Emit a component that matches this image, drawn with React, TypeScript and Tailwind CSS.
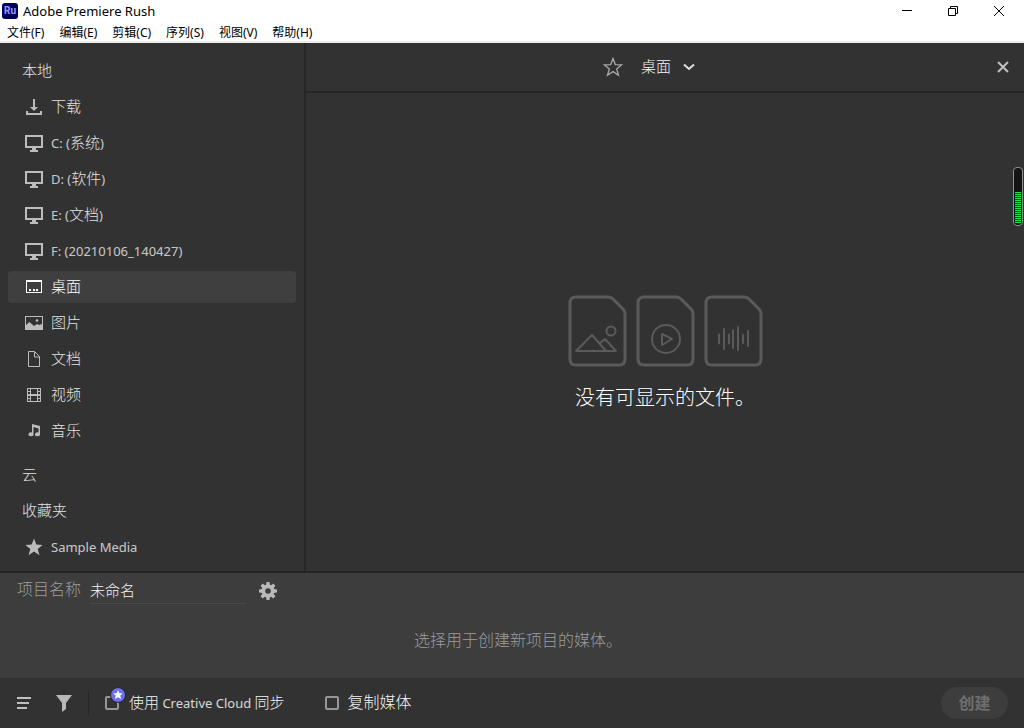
import { useState } from 'react'
import type { ReactNode } from 'react'

type Place = {
    id: string
    label: string
    icon: ReactNode
}

const MENUS = ['文件(F)', '编辑(E)', '剪辑(C)', '序列(S)', '视图(V)', '帮助(H)']

function DownloadIcon() {
    return (
        <svg width="20" height="20" viewBox="0 0 20 20" fill="currentColor">
            <path d="M9 2h2v8h3l-4 4-4-4h3zM2 14h2v2h12v-2h2v4H2z" />
        </svg>
    )
}

function DriveIcon() {
    return (
        <svg width="20" height="20" viewBox="0 0 20 20" fill="currentColor">
            <path fillRule="evenodd" d="M1 2h18v13h-7v2h2v2H6v-2h2v-2H1zM3 4v9h14V4z" />
        </svg>
    )
}

function DesktopIcon() {
    return (
        <svg width="20" height="20" viewBox="0 0 20 20" fill="currentColor">
            <path fillRule="evenodd" d="M2 3h16v13H2zM3 5v10h14V5z" />
            <path d="M5 12h2v2H5zM9 12h2v2H9zM12 12h2v2h-2z" />
        </svg>
    )
}

function PictureIcon() {
    return (
        <svg width="20" height="20" viewBox="0 0 20 20" fill="currentColor">
            <path fillRule="evenodd" d="M1 3h18v14H1zM2 4v8l3.500-3 4.500 4 3-2 2 1 3-1V4z" />
            <circle cx="13" cy="7.500" r="1.300" />
        </svg>
    )
}

function DocumentIcon() {
    return (
        <svg width="20" height="20" viewBox="0 0 20 20" fill="none" stroke="currentColor">
            <path d="M4.500 2.500h6l5 5v10h-11zM10.500 2.500v5.500h5" />
        </svg>
    )
}

function VideoIcon() {
    return (
        <svg width="20" height="20" viewBox="0 0 20 20" fill="currentColor">
            <path
                fillRule="evenodd"
                d="M3 3h14v14H3zM4 4v2h2V4zM4 7v2h2V7zM4 11v2h2v-2zM4 14v2h2v-2zM14 4v2h2V4zM14 7v2h2V7zM14 11v2h2v-2zM14 14v2h2v-2zM7 4v5h6V4zM7 11v5h6v-5z"
            />
        </svg>
    )
}

function MusicIcon() {
    return (
        <svg width="20" height="20" viewBox="0 0 20 20" fill="currentColor">
            <path d="M8 3l8 2v8.500a2.500 2 0 1 1-1.500-2V7.500L9.500 6v7a2.500 2 0 1 1-1.500-1.600z" />
        </svg>
    )
}

function StarIcon({ outline = false }: { outline?: boolean }) {
    return (
        <svg
            width="20"
            height="20"
            viewBox="0 0 20 20"
            fill={outline ? 'none' : 'currentColor'}
            stroke={outline ? 'currentColor' : 'none'}
            strokeWidth="1.300"
        >
            <path d="M10 1.500l2.300 6.100 6.200.3-4.800 4 1.800 6.300-5.500-3.600-5.500 3.600 1.800-6.300-4.800-4 6.200-.3z" />
        </svg>
    )
}

function GearIcon() {
    return (
        <svg width="20" height="20" viewBox="0 0 20 20">
            <g fill="#b9b9b9">
                <circle cx="10" cy="10" r="6.500" />
                <path d="M8.500 1h3l.5 4H8zM8.500 19h3l.5-4H8zM1 8.500v3l4 .5V8zM19 8.500v3l-4 .5V8z" />
                <path
                    d="M8.500 1h3l.5 4H8zM8.500 19h3l.5-4H8zM1 8.500v3l4 .5V8zM19 8.500v3l-4 .5V8z"
                    transform="rotate(45 10 10)"
                />
            </g>
            <circle cx="10" cy="10" r="2.800" fill="#3d3d3d" />
        </svg>
    )
}

function FileOutline({ children }: { children: ReactNode }) {
    return (
        <svg width="59" height="72" viewBox="0 0 59 72" fill="none" stroke="#5a5a5a" strokeWidth="2" strokeLinejoin="round" strokeLinecap="round">
            <path strokeWidth="3" d="M8 2h32q3 0 5 2l10 10q2 2 2 5v45q0 6-6 6H8q-6 0-6-6V8q0-6 6-6z" />
            {children}
        </svg>
    )
}

const LOCAL_PLACES: Place[] = [
    { id: 'downloads', label: '下载', icon: <DownloadIcon /> },
    { id: 'c', label: 'C: (系统)', icon: <DriveIcon /> },
    { id: 'd', label: 'D: (软件)', icon: <DriveIcon /> },
    { id: 'e', label: 'E: (文档)', icon: <DriveIcon /> },
    { id: 'f', label: 'F: (20210106_140427)', icon: <DriveIcon /> },
    { id: 'desktop', label: '桌面', icon: <DesktopIcon /> },
    { id: 'pictures', label: '图片', icon: <PictureIcon /> },
    { id: 'documents', label: '文档', icon: <DocumentIcon /> },
    { id: 'videos', label: '视频', icon: <VideoIcon /> },
    { id: 'music', label: '音乐', icon: <MusicIcon /> },
]

// Latin runs are set smaller than the Chinese ones next to them
function MixedText({ text }: { text: string }) {
    return (
        <>
            {text.split(/([\u4e00-\u9fff]+)/).map((part, i) => (
                <span key={i} className={i % 2 ? 'text-[15px] font-light' : 'text-[13px] opacity-85'}>{part}</span>
            ))}
        </>
    )
}

function PlaceButton({ place, active, onClick }: { place: Place; active: boolean; onClick: () => void }) {
    return (
        <button
            onClick={onClick}
            className={`flex h-8 w-full items-center gap-[7px] rounded-[4px] pl-4 text-left ${active ? 'bg-[#3f3f3f] text-white' : 'text-[#bcbcbc]'}`}
        >
            {place.icon}
            <span className={`pb-0.5 whitespace-pre leading-5 ${active ? 'text-white' : 'text-[#e2e2e2]'}`}>
                <MixedText text={place.label} />
            </span>
        </button>
    )
}

function SectionTitle({ children }: { children: ReactNode }) {
    return <h2 className="flex h-8 items-center pb-0.5 pl-[14px] text-[15px] font-light text-[#e2e2e2]">{children}</h2>
}

function TitleBar() {
    return (
        <header className="border-b-2 border-[#ececec] bg-white text-black">
            <div className="flex h-[22px] items-center justify-between">
                <div className="flex items-center gap-[5px] pl-[2px]">
                    <span className="flex size-4 items-center justify-center rounded-[3px] bg-[#00005b] font-[Roboto] text-[10px] leading-4 font-bold text-[#9999ff]">Ru</span>
                    <h1 className="text-[13px] leading-5">Adobe Premiere Rush</h1>
                </div>
                <div className="flex pr-[2px]">
                    <button aria-label="最小化" className="flex h-[22px] w-[46px] items-center justify-center">
                        <svg width="10" height="10" viewBox="0 0 10 10"><path d="M0 4h10v1H0z" /></svg>
                    </button>
                    <button aria-label="还原" className="flex h-[22px] w-[46px] items-center justify-center">
                        <svg width="10" height="10" viewBox="0 0 10 10" fill="none" stroke="#000">
                            <path d="M.5 2.500h7v7h-7zM2.500 2V.5h7v7H8" />
                        </svg>
                    </button>
                    <button aria-label="关闭" className="flex h-[22px] w-[46px] items-center justify-center">
                        <svg width="10" height="10" viewBox="0 0 10 10" stroke="#000"><path d="M0 0l10 10M10 0L0 10" /></svg>
                    </button>
                </div>
            </div>
            <nav className="flex h-[19px] gap-[15px] pl-[7px]">
                {MENUS.map(menu => (
                    <button key={menu} className="pt-px text-[12px] leading-5">{menu}</button>
                ))}
            </nav>
        </header>
    )
}

function Sidebar({ active, onSelect }: { active: string; onSelect: (id: string) => void }) {
    return (
        <aside className="flex w-[306px] shrink-0 flex-col gap-1 border-r-2 border-[#262626] px-2 pt-3 pb-2">
            <SectionTitle>本地</SectionTitle>
            {LOCAL_PLACES.map(place => (
                <PlaceButton key={place.id} place={place} active={place.id === active} onClick={() => onSelect(place.id)} />
            ))}
            <div className="mt-2 flex flex-col gap-1">
                <SectionTitle>云</SectionTitle>
                <SectionTitle>收藏夹</SectionTitle>
                <PlaceButton
                    place={{ id: 'sample', label: 'Sample Media', icon: <StarIcon /> }}
                    active={active === 'sample'}
                    onClick={() => onSelect('sample')}
                />
            </div>
        </aside>
    )
}

function AudioMeter() {
    return (
        <div className="absolute top-[124px] right-px flex h-[59px] w-[10px] flex-col justify-end rounded-[4px] border border-[#909090] bg-[#141414] px-px pb-[2px]">
            <div className="flex flex-col gap-px bg-[#0a4a1c]">
                {Array.from({ length: 16 }, (_, i) => (
                    <span key={i} className="h-px bg-[#1ee650]" />
                ))}
            </div>
        </div>
    )
}

function EmptyState() {
    return (
        <div className="flex flex-1 flex-col items-center justify-center pt-11">
            <div className="flex gap-[9px]">
                <FileOutline>
                    <path d="M8 56l16-16 14 16zM32 48l5-4 11 12H38" />
                    <circle cx="43" cy="36" r="4.500" />
                </FileOutline>
                <FileOutline>
                    <circle cx="30" cy="44" r="14" />
                    <path d="M26 39v11l10-6z" />
                </FileOutline>
                <FileOutline>
                    <path d="M15 39.500v9M20 34v20M25 39.500v9M29 35v18M34 32v23M39 40v8M44 36v15" />
                </FileOutline>
            </div>
            <p className="mt-4 text-[20px] leading-[30px] font-light text-white">没有可显示的文件。</p>
        </div>
    )
}

function Browser({ active, onSelect }: { active: string; onSelect: (id: string) => void }) {
    return (
        <main className="relative flex flex-1 flex-col">
            <div className="flex h-[50px] items-center border-b-2 border-[#262626]">
                <div className="flex flex-1 items-center justify-center gap-[18px] pr-1">
                    <button aria-label="收藏" className="text-[#a8a8a8]"><StarIcon outline /></button>
                    <div className="relative flex items-center">
                        <select
                            aria-label="位置"
                            value={active}
                            onChange={e => onSelect(e.target.value)}
                            className="w-[54px] appearance-none bg-transparent pb-0.5 text-[15px] leading-5 font-light text-[#f4f4f4] outline-none"
                        >
                            {LOCAL_PLACES.map(place => (
                                <option key={place.id} value={place.id}>{place.label}</option>
                            ))}
                        </select>
                        <svg className="pointer-events-none absolute right-0" width="12" height="8" viewBox="0 0 12 8" fill="none" stroke="#e0e0e0" strokeWidth="2">
                            <path d="M1 1.500l5 4.500 5-4.500" />
                        </svg>
                    </div>
                </div>
                <button aria-label="关闭面板" className="mr-[14px]">
                    <svg width="14" height="14" viewBox="0 0 14 14" stroke="#c0c0c0" strokeWidth="2"><path d="M2 2l10 10M12 2L2 12" /></svg>
                </button>
            </div>
            <EmptyState />
            <AudioMeter />
        </main>
    )
}

function ProjectBar() {
    return (
        <section className="h-[107px] border-t-2 border-[#262626] bg-[#3d3d3d]">
            <div className="flex h-9 items-center pl-[17px]">
                <label htmlFor="project-name" className="w-[73px] pb-1 text-[16px] leading-5 font-light text-[#9c9c9c]">项目名称</label>
                <input
                    id="project-name"
                    defaultValue="未命名"
                    className="h-[26px] w-[156px] border-b border-[#4a4a4a] bg-transparent pb-0.5 text-[15px] font-light text-[#f4f4f4] outline-none"
                />
                <button aria-label="设置" className="ml-3"><GearIcon /></button>
            </div>
            <p className="mt-[21px] pl-3 text-center text-[16px] leading-5 font-light text-[#9c9c9c]">选择用于创建新项目的媒体。</p>
        </section>
    )
}

const checkboxClass = 'size-[14px] appearance-none rounded-[2px] border-2 border-[#969696] checked:bg-[#969696]'

function Footer() {
    return (
        <footer className="flex h-[50px] items-center px-4 text-[#f4f4f4]">
            <button aria-label="排序" className="w-10">
                <svg width="16" height="14" viewBox="0 0 16 14" fill="#c0c0c0"><path d="M1 1h14v2H1zM1 6h12v2H1zM1 11h10v2H1z" /></svg>
            </button>
            <button aria-label="筛选">
                <svg width="16" height="18" viewBox="0 0 16 18" fill="#b9b9b9"><path d="M0 1h16l-6 8v6l-4 3V9z" /></svg>
            </button>
            <div className="mx-4 h-6 w-px bg-[#262626]" />
            <div className="flex items-center gap-[10px]">
                <span className="relative flex">
                    <input id="cloud-sync" type="checkbox" className={checkboxClass} />
                    <svg className="pointer-events-none absolute -top-[9px] left-[5px]" width="16" height="16" viewBox="0 0 16 16">
                        <circle cx="8" cy="8" r="7.500" fill="#6e6ef0" stroke="#262626" />
                        <path fill="#fff" d="M8 3l1.400 3.200 3.400.2-2.600 2.200.9 3.400L8 10.200 4.900 12l.9-3.400-2.600-2.200 3.400-.2z" />
                    </svg>
                </span>
                <label htmlFor="cloud-sync" className="pb-0.5 whitespace-pre leading-5"><MixedText text="使用 Creative Cloud 同步" /></label>
            </div>
            <div className="ml-10 flex items-center gap-[9px]">
                <input id="copy-media" type="checkbox" className={checkboxClass} />
                <label htmlFor="copy-media" className="pb-0.5 text-[16px] leading-5 font-light">复制媒体</label>
            </div>
            <button disabled className="ml-auto h-8 w-[67px] rounded-full bg-[#3d3d3d] text-[16px] font-bold text-[#6e6e6e]">创建</button>
        </footer>
    )
}

export default function App() {
    const [active, setActive] = useState('desktop')

    return (
        <div className="flex min-h-screen flex-col bg-[#323232] font-['Noto_Sans','Noto_Sans_CJK_SC',sans-serif]">
            <TitleBar />
            <div className="flex flex-1">
                <Sidebar active={active} onSelect={setActive} />
                <Browser active={active} onSelect={setActive} />
            </div>
            <ProjectBar />
            <Footer />
        </div>
    )
}
